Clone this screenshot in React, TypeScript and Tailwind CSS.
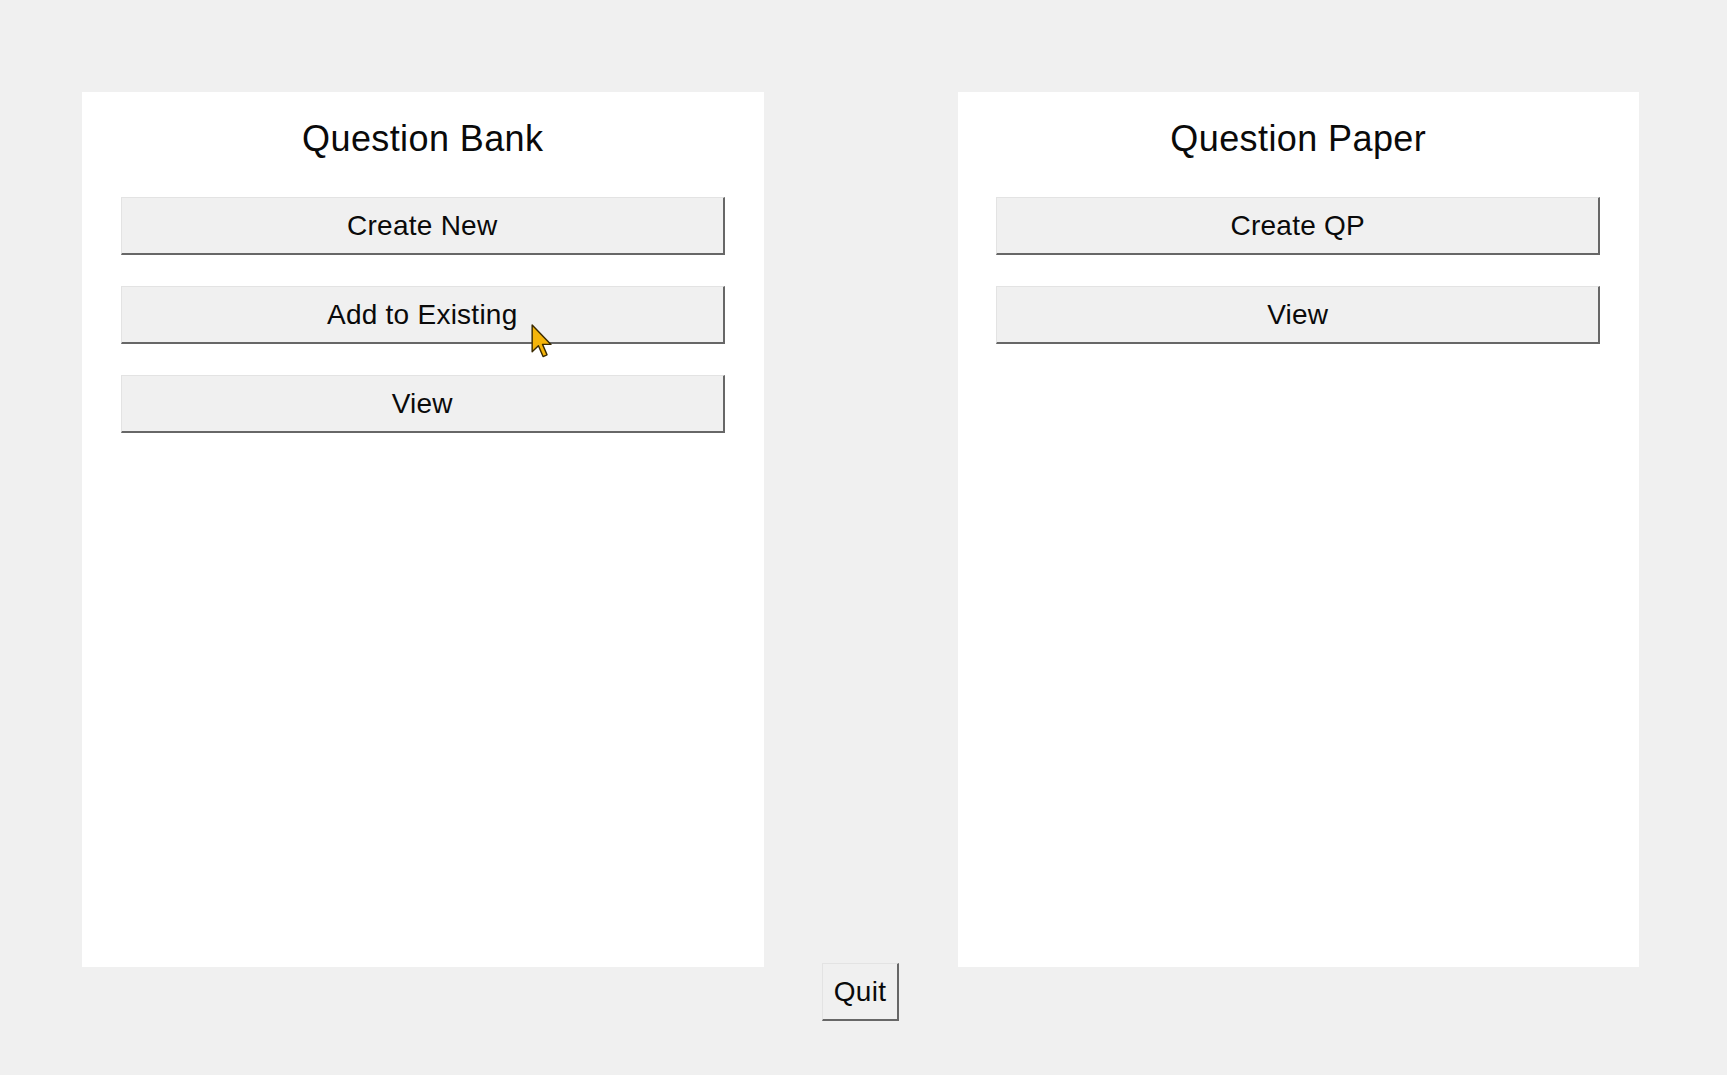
import React from "react";

const font = { fontFamily: '"Liberation Sans", Arial, sans-serif' };

function WinButton({ label, className = "" }: { label: string; className?: string }) {
  return (
    <div
      className={
        "flex items-center justify-center bg-[#f0f0f0] border-t border-l border-t-[#e3e3e3] border-l-[#e3e3e3] border-r-2 border-b-2 border-r-[#676767] border-b-[#676767] text-[28px] tracking-[0.25px] text-[#0a0a0a] " +
        className
      }
    >
      <span className="leading-none">{label}</span>
    </div>
  );
}

function Panel({ title, buttons }: { title: string; buttons: string[] }) {
  return (
    <div className="w-[682px] h-[875px] bg-white flex flex-col items-center">
      <div className="mt-[27px] h-[40px] leading-[40px] text-[36px] tracking-[0.4px] text-[#0a0a0a]">{title}</div>
      <div className="mt-[38px] flex flex-col gap-[31px]">
        {buttons.map((b) => (
          <WinButton key={b} label={b} className="w-[604px] h-[58px]" />
        ))}
      </div>
    </div>
  );
}

export default function App() {
  return (
    <div className="w-[1727px] h-[1075px] bg-[#f0f0f0] relative overflow-hidden" style={font}>
      <div className="pt-[92px] pl-[82px] w-[1639px]">
        <div className="flex gap-[194px]">
          <Panel title="Question Bank" buttons={["Create New", "Add to Existing", "View"]} />
          <Panel title="Question Paper" buttons={["Create QP", "View"]} />
        </div>
        <div className="flex justify-center mt-[-4px]">
          <WinButton label="Quit" className="w-[77px] h-[58px]" />
        </div>
      </div>
      <svg
        className="absolute left-[530px] top-[324px]"
        width="24"
        height="34"
        viewBox="0 0 12 19"
      >
        <path
          d="M0.5 0.5 L0.5 15.5 L4 12.2 L6.6 18.2 L8.8 17.2 L6.3 11.4 L11 11.4 Z"
          fill="#f5b50a"
          stroke="#3a2a00"
          strokeWidth="0.8"
          strokeLinejoin="round"
        />
      </svg>
    </div>
  );
}
